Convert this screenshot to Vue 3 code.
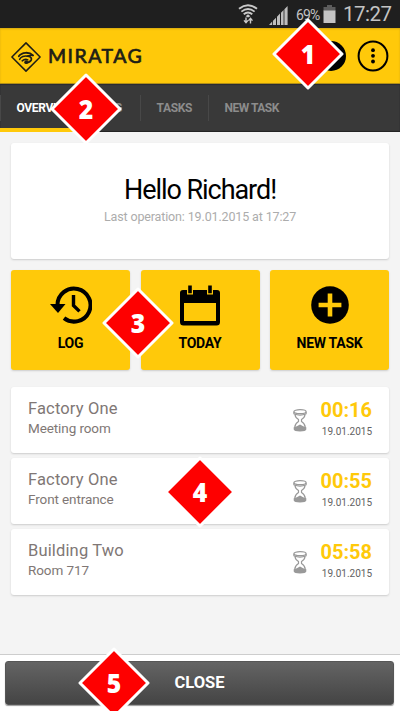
<script setup>
const tabs = ['OVERVIEW', 'LOG', 'TASKS', 'NEW TASK']
const rows = [
  { place: 'Factory One', spot: 'Meeting room', time: '00:16' },
  { place: 'Factory One', spot: 'Front entrance', time: '00:55' },
  { place: 'Building Two', spot: 'Room 717', time: '05:58' },
]
const markers = [1, 2, 3, 4, 5]
</script>

<template>
  <div class="screen">
    <div class="status">
      <svg class="wifi" width="20" height="21" viewBox="0 0 20 21" fill="none" stroke="#c9c9c9">
        <path d="M1 4.7Q10-2.2 19 4.7" stroke-width="2" />
        <path d="M3.4 7.6Q10 2.4 16.6 7.6" stroke-width="1.8" />
        <path d="M5.7 10.3Q10 6.8 14.3 10.3" stroke-width="1.8" />
        <path d="M7.6 12.2L10 10.2 12.4 12.2 10 13.5Z" fill="#c9c9c9" stroke="none" />
        <path d="M8 13.5V18.6M6 16.4L8 18.6 10 16.4M12.5 19.5V14.5M10.5 16.6L12.5 14.4 14.5 16.6" stroke-width="1.4" />
      </svg>
      <svg class="signal" width="19" height="19" viewBox="0 0 19 19" fill="#bebebe">
        <path d="M0 19L3.2 15.6V19ZM4 19V14.8L7 11.8V19ZM8 19V10.8L11 7.6V19ZM12 19V6.8L14.6 4V19ZM15.4 19V3.2L18.6 0V19Z" />
      </svg>
      <span class="percent">69%</span>
      <svg class="battery" width="13" height="18" viewBox="0 0 13 18">
        <path d="M4 0H9V2H12.5V6H.5V2H4Z" fill="#5d5d5d" />
        <path d="M.5 5.5H12.5V18H.5Z" fill="#c4c4c4" />
      </svg>
      <span class="clock">17:27</span>
    </div>

    <header class="bar">
      <svg class="logo" width="30" height="30" viewBox="0 0 30 30" fill="none" stroke="#1e1e16">
        <path d="M15 .9L29.1 15 15 29.1.9 15Z" stroke-width="1.5" stroke-linejoin="round" />
        <path d="M7.8 14.3C10.6 9.9 18.3 9.6 22 13.4" stroke-width="1.8" stroke-linecap="round" />
        <path d="M22 13.4C19 12.9 18 13.6 16.5 14.2 13.5 13.3 9.6 15 8.6 17.4" stroke-width="1.5" stroke-linecap="round" />
        <path d="M16.5 14.2C19 14.2 20.9 15.6 20.3 17.8 19.6 19.4 17.5 20.4 15.6 20.6" stroke-width="1.8" stroke-linecap="round" />
        <path d="M11.2 18.8Q14 16.5 16.8 17.9" stroke-width="1.6" stroke-linecap="round" />
        <circle cx="15.2" cy="20.2" r="1.9" fill="#1e1e16" stroke="none" />
      </svg>
      <span class="brand">MIRATAG</span>
      <span class="dot"></span>
      <svg class="more" width="32" height="32" viewBox="0 0 32 32">
        <circle cx="16" cy="16" r="14.4" fill="none" stroke="#000" stroke-width="2" />
        <circle cx="16" cy="10.2" r="1.9" /><circle cx="16" cy="15.8" r="1.9" /><circle cx="16" cy="21.5" r="1.9" />
      </svg>
    </header>

    <nav class="tabs">
      <span v-for="(tab, i) in tabs" :key="tab" class="tab" :class="{ active: i === 0 }">{{ tab }}</span>
    </nav>

    <main class="content">
      <section class="card hello">
        <h1>Hello Richard!</h1>
        <p>Last operation: 19.01.2015 at 17:27</p>
      </section>

      <section class="tiles">
        <div class="tile">
          <svg width="42" height="38" viewBox="0 0 42 38" fill="none" stroke="#000">
            <path d="M7.5 19A16.5 16.5 0 1 1 14 32.2" stroke-width="4" />
            <path d="M0 18H15.5L8 27Z" fill="#000" stroke="none" />
            <path d="M23.5 9V19.5L29.5 25.4" stroke-width="3.4" />
          </svg>
          <span>LOG</span>
        </div>
        <div class="tile">
          <svg width="42" height="42" viewBox="0 0 42 42">
            <path fill-rule="evenodd" d="M4 5H38Q41 5 41 8V37Q41 40.5 37.5 40.5H4.5Q1 40.5 1 37V8Q1 5 4 5ZM5 18V36H37V18Z" />
            <path d="M8 0H14V9.4H8ZM28 0H34V9.4H28Z" fill="#ffc90a" />
            <path d="M9.2.5H12.8V8.2H9.2ZM29.2.5H32.8V8.2H29.2Z" />
          </svg>
          <span>TODAY</span>
        </div>
        <div class="tile">
          <svg width="38" height="38" viewBox="0 0 38 38">
            <circle cx="19" cy="19" r="18.8" />
            <path d="M19 7.6V30.4M7.6 19H30.4" stroke="#ffc90a" stroke-width="4.6" />
          </svg>
          <span>NEW TASK</span>
        </div>
      </section>

      <section class="list">
        <article v-for="row in rows" :key="row.time" class="card row">
          <div class="where">
            <strong>{{ row.place }}</strong>
            <span>{{ row.spot }}</span>
          </div>
          <svg class="glass" width="14" height="23" viewBox="0 0 14 23" fill="none" stroke="#999" stroke-width="1.2">
            <ellipse cx="7" cy="2.7" rx="6.1" ry="2" />
            <path d="M.9 2.7V4.8Q7 7.4 13.1 4.8V2.7M2 5.6Q2 8.4 5.5 10.5V12.5Q2 14.6 1.8 18M12 5.6Q12 8.4 8.5 10.5V12.5Q12 14.6 12.2 18" />
            <path d="M.7 18.3Q3.8 17.8 7 15.5 10.2 17.8 13.3 18.3V20.6Q13 22.5 7 22.6 1 22.5.7 20.6Z" fill="#999" stroke="none" />
          </svg>
          <div class="when">
            <b>{{ row.time }}</b>
            <span>19.01.2015</span>
          </div>
        </article>
      </section>
    </main>

    <footer class="bottom"><button class="close">CLOSE</button></footer>

    <svg v-for="n in markers" :key="n" class="marker" :class="'m' + n" width="72" height="72" viewBox="0 0 72 72">
      <path d="M36 2L70 36 36 70 2 36Z" fill="#fe0000" stroke="#fff" stroke-width="3" stroke-linejoin="round" />
      <text x="36" y="45.5" text-anchor="middle" fill="#fff" textLength="14.5" lengthAdjust="spacingAndGlyphs">{{ n }}</text>
    </svg>
  </div>
</template>

<style>
body { margin: 0; background: #f4f4f4; }
</style>

<style scoped>
.screen { position: relative; width: 400px; height: 711px; overflow: hidden; display: flex; flex-direction: column; background: #f4f4f4; font-family: Roboto, sans-serif; }
.status { height: 28px; flex: none; display: flex; align-items: flex-start; background: #1f1f1f; color: #c4c4c4; }
.wifi { margin: 4px 0 0 238px; }
.signal { margin: 6px 0 0 11px; }
.percent { margin: 5px 0 0 8px; width: 24px; font-size: 14px; line-height: 20px; letter-spacing: -.9px; }
.battery { margin: 5px 0 0 3px; }
.clock { margin: 2px 0 0 7px; font-size: 20.5px; line-height: 25px; letter-spacing: -.5px; }
.bar { height: 56px; flex: none; box-sizing: border-box; display: flex; align-items: center; padding: 0 11px; background: #ffc90a; border-bottom: 1px solid #b28e16; box-shadow: inset 0 1px 2px #d5a910; }
.logo { margin-top: 2px; }
.brand { margin-left: 7px; font: 400 19.5px/24px Lato, sans-serif; letter-spacing: 1.5px; color: #1e1e16; -webkit-text-stroke: .7px #1e1e16; }
.dot { width: 30px; height: 30px; margin-left: auto; margin-right: 11px; border-radius: 50%; background: #000; }
.tabs { height: 48px; flex: none; display: flex; background: #393939; box-shadow: inset 0 1px 1px #292b32, inset 0 -1px 1px #222; }
.tab { position: relative; box-sizing: border-box; width: 176px; padding: 0 0 0 16.5px; font-size: 12px; font-weight: 700; line-height: 49px; letter-spacing: -.35px; color: #8c8c8c; }
.tab::before { content: ''; position: absolute; left: 0; top: 11px; width: 1px; height: 26px; background: #484848; }
.tab:nth-child(2) { width: 56px; }
.tab:nth-child(3) { width: 68px; }
.tab:nth-child(4) { letter-spacing: -.5px; }
.tab.active { color: #fff; width: 84px; border-bottom: 4px solid #ffc90a; }
.content { padding: 11px 11px 0; flex: 1; }
.card { background: #fff; border-radius: 3px; box-shadow: 0 1px 2px #ccc; }
.hello { height: 116px; box-sizing: border-box; padding-top: 30px; text-align: center; }
h1 { margin: 0; font-size: 27px; line-height: 35px; font-weight: 400; letter-spacing: -1.05px; color: #000; }
.hello p { margin: 0; font-size: 12.5px; line-height: 17px; letter-spacing: -.14px; color: #acacac; }
.tiles { display: grid; grid-template-columns: repeat(3, 119px); justify-content: space-between; height: 100px; margin-top: 11px; }
.tile { display: flex; flex-direction: column; align-items: center; justify-content: space-between; box-sizing: border-box; padding: 16px 0 18px; border-radius: 3px; background: #ffc90a; box-shadow: 0 1px 2px #ccc; }
.tile span { font-size: 14px; line-height: 17px; font-weight: 700; letter-spacing: -.25px; color: #000; }
.tile:nth-child(2) svg { margin-top: -1px; }
.list { display: grid; gap: 5px; margin-top: 17px; }
.row { height: 66px; display: flex; box-sizing: border-box; padding: 0 17px; }
.where, .when { display: flex; flex-direction: column; }
.where { flex: 1; color: #807775; }
.where strong { margin-top: 12px; font-size: 16.5px; line-height: 20px; font-weight: 400; letter-spacing: .15px; }
.where span { font-size: 13.5px; line-height: 18px; letter-spacing: -.1px; }
.glass { margin: 22px 14px 0 0; }
.when { width: 51px; align-items: flex-end; }
.when b { margin-top: 12px; font-size: 20px; line-height: 22px; color: #ffc90a; }
.when span { margin-top: 4px; font-size: 10px; line-height: 14px; color: #626262; }
.bottom { box-sizing: border-box; height: 57px; flex: none; padding: 6px 6px 6px 5px; background: #fff; border-top: 1px solid #cdcdcd; }
.close { display: block; width: 389px; height: 44px; padding: 0; border: 1px solid #565656; border-radius: 3px; font: 700 16.5px/42px Roboto, sans-serif; color: #fff; background: linear-gradient(#646464, #444); box-shadow: 0 1px 1px #999; }
.marker { position: absolute; }
.marker text { font: 800 26px "Open Sans", sans-serif; }
.m1 { left: 272px; top: 18px; }
.m2 { left: 50px; top: 73px; }
.m3 { left: 102px; top: 287px; }
.m4 { left: 164px; top: 456px; }
.m5 { left: 78px; top: 647px; }
</style>
